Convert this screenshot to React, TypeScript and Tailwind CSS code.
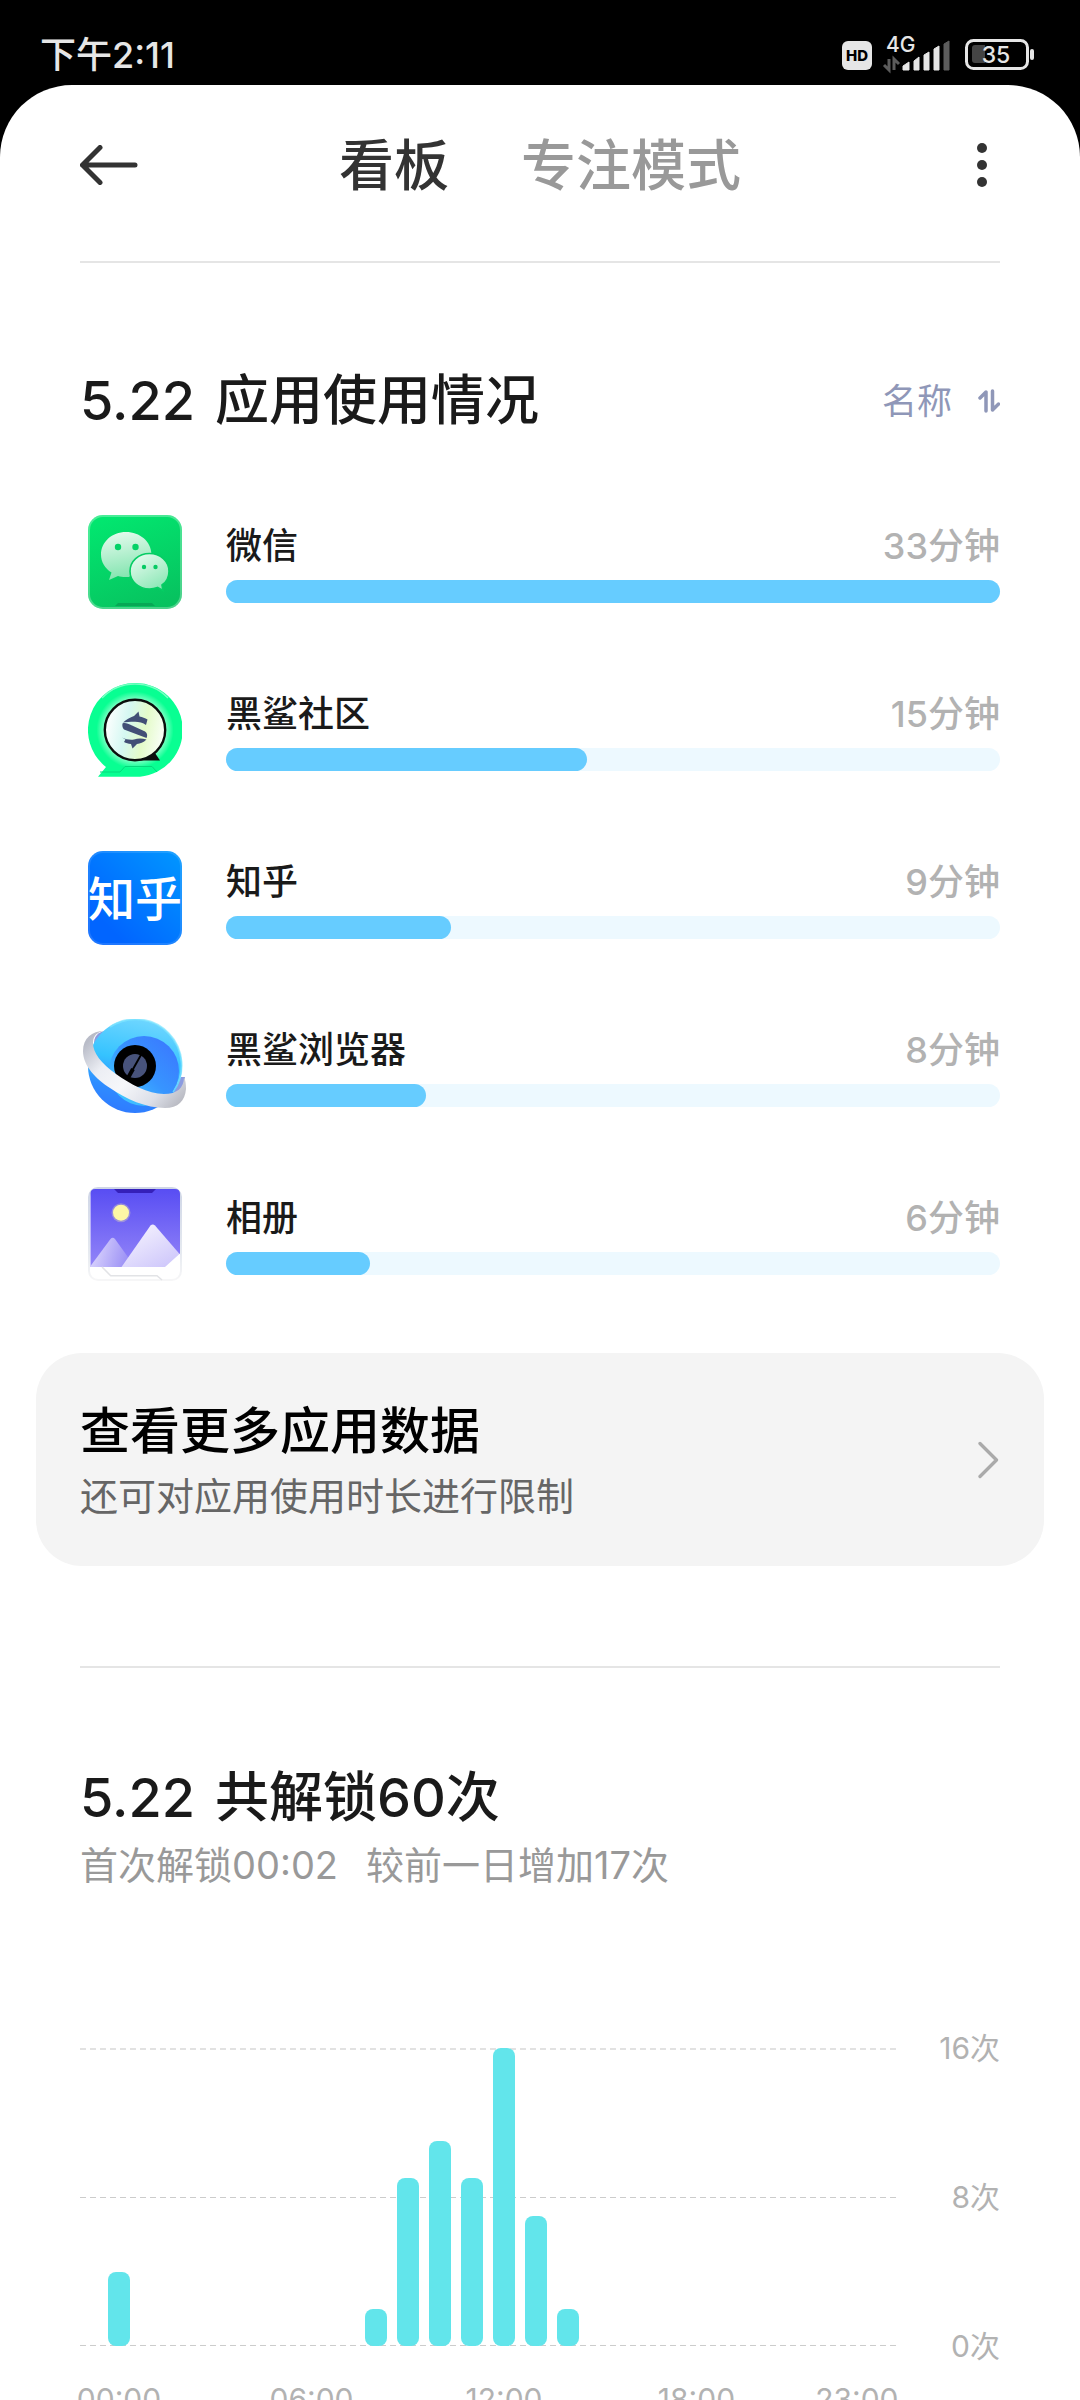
import { ReactNode } from 'react';

type AppUsage = {
  name: string;
  minutes: number;
  percent: number;
  icon: ReactNode;
};

const WeChatIcon = () => (
  <svg width="94" height="94" viewBox="0 0 94 94" aria-hidden="true">
    <defs>
      <linearGradient id="wc-bg" x1="0.3" y1="0" x2="0.7" y2="1">
        <stop offset="0" stopColor="#02e66f" />
        <stop offset="1" stopColor="#07c25f" />
      </linearGradient>
      <linearGradient id="wc-big" x1="0.4" y1="0" x2="0.6" y2="1">
        <stop offset="0" stopColor="#e2faec" />
        <stop offset="1" stopColor="#7ce3ab" />
      </linearGradient>
      <linearGradient id="wc-small" x1="0.2" y1="0" x2="0.8" y2="1">
        <stop offset="0" stopColor="#e6fbef" />
        <stop offset="1" stopColor="#86e6b2" />
      </linearGradient>
    </defs>
    <rect width="94" height="94" rx="15" fill="url(#wc-bg)" />
    <rect x="1" y="1" width="92" height="92" rx="14" fill="none" stroke="#fff" strokeOpacity="0.28" strokeWidth="2" />
    <path d="M27 91 30 88H64L67 91Z" fill="#06a855" />
    <path
      d="M38 17C24 17 13 27 13 39.500C13 47 17 53.500 23.500 57.500L21 65L30 61C33 62 36 62.300 41 62L63.500 39C63 26.500 52 17 38 17Z"
      fill="url(#wc-big)"
    />
    <circle cx="30" cy="32" r="3.200" fill="#04d267" />
    <circle cx="47.500" cy="32" r="3.200" fill="#04d267" />
    <path
      d="M61.500 38.500C50.500 38.500 42 46.500 42 56.200C42 66 50.500 74 61.500 74C64.500 74 67 73.500 69.500 72.500L75 75.500L74 70C78.500 67 81 62 81 56.200C81 46.500 72.500 38.500 61.500 38.500Z"
      fill="url(#wc-small)"
      stroke="#06cd64"
      strokeWidth="1.600"
    />
    <circle cx="56" cy="52" r="2.200" fill="#06ca63" />
    <circle cx="67.500" cy="52" r="2.200" fill="#06ca63" />
  </svg>
);

const CommunityIcon = () => (
  <svg width="94" height="94" viewBox="0 0 94 94" aria-hidden="true">
    <defs>
      <radialGradient id="cm-glow" cx="47" cy="47" r="47" gradientUnits="userSpaceOnUse">
        <stop offset="0.650" stopColor="#7dffc4" />
        <stop offset="0.820" stopColor="#08ff92" />
        <stop offset="1" stopColor="#08ff92" />
      </radialGradient>
      <linearGradient id="cm-disc" x1="0" y1="0.400" x2="1" y2="0.600">
        <stop offset="0" stopColor="#fff" />
        <stop offset="0.350" stopColor="#d5f8f2" />
        <stop offset="0.650" stopColor="#e4fbc9" />
        <stop offset="1" stopColor="#fbfffb" />
      </linearGradient>
    </defs>
    <path d="M47 0A47 47 0 0 1 52 93.800H10L18 84A47 47 0 0 1 47 0Z" fill="url(#cm-glow)" />
    <path d="M14 15A46 46 0 0 1 80 15" fill="none" stroke="#7affc4" strokeWidth="1.500" />
    <path d="M12 89H32L37 83.500H64L69 89" fill="none" stroke="#05d97c" strokeWidth="1" />
    <path d="M67 70L72 77.500H47Z" fill="#0b0f0d" />
    <circle cx="47" cy="47" r="30.200" fill="url(#cm-disc)" stroke="#0b0f0d" strokeWidth="2.400" />
    <path
      d="M35 39.500C38 36.500 42 34.500 46 33L50.500 28.500L51.500 33.500C54.500 34 57 35 59.500 36.500L58 42C55 39.500 50 38.500 46 38.700C42 38.800 38 39 35 39.500Z"
      fill="#424f76"
    />
    <path d="M34.500 40.500C37 39.500 40 40.500 44 42.500L56 48C59 49.500 60 52 58.500 55L36 46.500C34.500 45 34 42.500 34.500 40.500Z" fill="#424f76" />
    <path
      d="M34 54.500C38 56.500 42 57 46 56.500C50 55 54 55 58.500 56.500C55.500 59.500 52 60.500 49 61L44.500 65.500L43 61C40 60.800 38 60 36 59L37.500 56.500Z"
      fill="#424f76"
    />
  </svg>
);

const ZhihuIcon = () => (
  <svg width="94" height="94" viewBox="0 0 94 94" aria-hidden="true">
    <defs>
      <linearGradient id="zh-bg" x1="0.200" y1="0.800" x2="1" y2="0">
        <stop offset="0" stopColor="#0165ff" />
        <stop offset="1" stopColor="#0197ff" />
      </linearGradient>
    </defs>
    <rect width="94" height="94" rx="15" fill="url(#zh-bg)" />
    <rect x="1" y="1" width="92" height="92" rx="14" fill="none" stroke="#fff" strokeOpacity="0.120" strokeWidth="2" />
    <text x="47" y="65" textAnchor="middle" fontSize="47" fontWeight="500" fill="#fff">
      知乎
    </text>
  </svg>
);

const BrowserIcon = () => (
  <svg width="104" height="94" viewBox="1 0 104 94" aria-hidden="true">
    <defs>
      <linearGradient id="br-globe" x1="0.600" y1="0" x2="0.400" y2="1">
        <stop offset="0" stopColor="#6fd6ff" />
        <stop offset="0.450" stopColor="#35c3ff" />
        <stop offset="0.750" stopColor="#2f8dff" />
        <stop offset="1" stopColor="#2f7bff" />
      </linearGradient>
      <linearGradient id="br-core" x1="0.900" y1="0.200" x2="0.200" y2="0.900">
        <stop offset="0" stopColor="#3a7dff" />
        <stop offset="0.500" stopColor="#3795ff" />
        <stop offset="1" stopColor="#3fc4ff" />
      </linearGradient>
      <linearGradient id="br-ring" x1="0" y1="0.200" x2="1" y2="0.900">
        <stop offset="0" stopColor="#b9bcc8" />
        <stop offset="0.250" stopColor="#eceef4" />
        <stop offset="0.500" stopColor="#f6f7fa" />
        <stop offset="0.780" stopColor="#dcdfe8" />
        <stop offset="1" stopColor="#b5b6be" />
      </linearGradient>
    </defs>
    <path d="M22 12C14 14 10 20 13 30L26 20Z" fill="#8b9be0" />
    <path d="M103 58C103 68 98 74 88 75L99 58Z" fill="#8b9be0" />
    <circle cx="53" cy="47" r="47" fill="url(#br-globe)" />
    <path d="M28 8A46 46 0 0 1 91 73" fill="none" stroke="#7fe6ff" strokeOpacity="0.700" strokeWidth="2" />
    <circle cx="62" cy="52" r="35" fill="url(#br-core)" />
    <circle cx="53" cy="47" r="21" fill="#000" />
    <circle cx="53" cy="47" r="12" fill="#48537b" />
    <path d="M59.500 35L46 59" stroke="#000" strokeWidth="2" />
    <path d="M51 50L46 59" stroke="#000" strokeWidth="4" />
    <path
      d="M22 12C10 12 1 19 1 32C1 47 14 60 28 69C44 80 64 89 83 89C96 89 103 82 104 70C104 65 103.500 61 102 58C102 69 95 75 82 75C66 75 48 65 34 55C19 44 11 34 11 24C11 17 15 13 22 12Z"
      fill="url(#br-ring)"
    />
  </svg>
);

const AlbumIcon = () => (
  <svg width="94" height="94" viewBox="0 0 94 94" aria-hidden="true">
    <defs>
      <linearGradient id="al-sky" x1="0" y1="0" x2="0" y2="1">
        <stop offset="0" stopColor="#584df3" />
        <stop offset="1" stopColor="#9385f8" />
      </linearGradient>
      <linearGradient id="al-near" x1="0.300" y1="0.100" x2="0.900" y2="0.900">
        <stop offset="0" stopColor="#f1eefe" />
        <stop offset="1" stopColor="#cfc8fb" />
      </linearGradient>
      <linearGradient id="al-far" x1="0" y1="0.500" x2="1" y2="0.700">
        <stop offset="0" stopColor="#dcd6fd" />
        <stop offset="1" stopColor="#9084f4" />
      </linearGradient>
      <linearGradient id="al-edge" x1="0" y1="0" x2="0" y2="1">
        <stop offset="0" stopColor="#cfd6e6" />
        <stop offset="0.700" stopColor="#e6eaf0" />
        <stop offset="1" stopColor="#f6f6f7" />
      </linearGradient>
    </defs>
    <rect x="1" y="1" width="92" height="92" rx="9" fill="#fff" stroke="url(#al-edge)" strokeWidth="2" />
    <path d="M7 2H87Q92 2 92 7V80H2.500V7Q2.500 2 7 2Z" fill="url(#al-sky)" />
    <path d="M26 2H68L64 6H30Z" fill="#3520b9" />
    <circle cx="33" cy="25.700" r="9.500" fill="#fdf6a5" fillOpacity="0.300" />
    <circle cx="33" cy="25.700" r="8" fill="#fdf7a6" />
    <path d="M2.500 79L22.500 52Q24.700 49.500 27 52L47 80H2.500Z" fill="url(#al-far)" />
    <path d="M33.500 80L62.500 38.500Q64.700 36.500 67 38.500L92 67.500V80Z" fill="url(#al-near)" />
    <path d="M92 66.500V80H77Z" fill="#fff" />
    <path d="M14 80L22.700 88.700H69L74 93" fill="none" stroke="#e2e3e6" strokeWidth="1.500" />
  </svg>
);

const apps: AppUsage[] = [
  { name: '微信', minutes: 33, percent: 100, icon: <WeChatIcon /> },
  { name: '黑鲨社区', minutes: 15, percent: 46.6, icon: <CommunityIcon /> },
  { name: '知乎', minutes: 9, percent: 29.1, icon: <ZhihuIcon /> },
  { name: '黑鲨浏览器', minutes: 8, percent: 25.8, icon: <BrowserIcon /> },
  { name: '相册', minutes: 6, percent: 18.6, icon: <AlbumIcon /> },
];

// unlock count for every hour of the day
const unlocks = [4, 0, 0, 0, 0, 0, 0, 0, 2, 9, 11, 9, 16, 7, 2, 0, 0, 0, 0, 0, 0, 0, 0, 0];
const hourLabels: Record<number, string> = {
  0: '00:00',
  6: '06:00',
  12: '12:00',
  18: '18:00',
  23: '23:00',
};

const StatusBar = () => (
  <div className="flex h-[85px] shrink-0 items-center justify-between pt-6 pr-[46px] pl-10 text-[#e6e6e6]">
    <span className="text-[36px] leading-[48px] font-medium">下午2:11</span>
    <svg width="194" height="40" viewBox="0 0 194 40" className="overflow-visible" role="img" aria-label="HD 4G 35%">
      <rect x="2" y="6" width="30" height="29" rx="6" fill="#e6e6e6" />
      <text x="17" y="26" textAnchor="middle" fontSize="15" fontWeight="800" fill="#000">
        HD
      </text>
      <text x="46" y="17" fontSize="21" fontWeight="500" fill="#e6e6e6">
        4G
      </text>
      <path d="M49 24V35L44 30M54 35V24L59 29" fill="none" stroke="#5c5c5c" strokeWidth="3" />
      <path d="M63 35V31L69 27V35Z" fill="#e6e6e6" stroke="#e6e6e6" strokeLinejoin="round" />
      <path d="M74 35V26L79 22V35Z" fill="#e6e6e6" stroke="#e6e6e6" strokeLinejoin="round" />
      <path d="M84 35V20L89 17V35Z" fill="#e6e6e6" stroke="#e6e6e6" strokeLinejoin="round" />
      <path d="M94 35V14L99 11V35Z" fill="#e6e6e6" stroke="#e6e6e6" strokeLinejoin="round" />
      <path d="M104 35V9L109 6V35Z" fill="#5c5c5c" stroke="#5c5c5c" strokeLinejoin="round" />
      <rect x="126.500" y="5.500" width="61" height="28" rx="7" fill="none" stroke="#e6e6e6" strokeWidth="3" />
      <path d="M135 10H145V28H135Q132 28 132 25V13Q132 10 135 10Z" fill="#444" />
      <rect x="190" y="14" width="4" height="11" rx="2" fill="#e6e6e6" />
      <text x="156" y="28" textAnchor="middle" fontSize="23" fontWeight="500" fill="#e6e6e6">
        35
      </text>
    </svg>
  </div>
);

const Header = () => (
  <header className="flex h-40 items-center justify-between px-20">
    <button type="button" aria-label="返回" className="w-[58px]">
      <svg width="58" height="40" viewBox="0 0 58 40" fill="none" stroke="#333" strokeWidth="5" strokeLinecap="round" strokeLinejoin="round">
        <path d="M20 2.500L2.500 20L20 37.500M2.500 20H55" />
      </svg>
    </button>
    <nav className="flex gap-[72px] text-[55px] leading-[72px] font-medium">
      <button type="button" className="text-[#333]">
        看板
      </button>
      <button type="button" className="text-[#999]">
        专注模式
      </button>
    </nav>
    <button type="button" aria-label="更多" className="flex w-[58px] justify-end pr-3">
      <svg width="12" height="46" viewBox="0 0 12 46" fill="#333">
        <circle cx="6" cy="6" r="5" />
        <circle cx="6" cy="23" r="5" />
        <circle cx="6" cy="40" r="5" />
      </svg>
    </button>
  </header>
);

const SectionTitle = ({ date, children }: { date: string; children: ReactNode }) => (
  <h2 className="flex gap-5 text-[54px] leading-[64px] font-medium text-[#1a1a1a]">
    <span>{date}</span>
    <span>{children}</span>
  </h2>
);

const AppRow = ({ app }: { app: AppUsage }) => (
  <li className="flex items-end gap-9">
    <div className="flex w-[110px] justify-center">{app.icon}</div>
    <div className="flex-1 pb-[6px]">
      <div className="mb-[10px] flex justify-between text-[36px] leading-[48px] font-medium">
        <span className="text-[#1a1a1a]">{app.name}</span>
        <span className="text-[#b2b2b2]">{app.minutes}分钟</span>
      </div>
      <div className="h-[23px] rounded-full bg-[#edf9ff]">
        <div className="h-full rounded-full bg-[#66ccff]" style={{ width: `${app.percent}%` }} />
      </div>
    </div>
  </li>
);

const UnlockChart = () => (
  <div className="mt-[139px] text-[30px] leading-10 text-[#b2b2b2]">
    <div className="flex justify-between">
      <div className="mr-[24px] flex-1 py-5">
        <div className="relative h-[298px]">
          <svg className="absolute inset-0 h-full w-full" aria-hidden="true" strokeDasharray="6 4">
            <line x1="0" y1="1" x2="100%" y2="1" stroke="#e2e2e2" strokeWidth="2" />
            <line x1="0" y1="149.500" x2="100%" y2="149.500" stroke="#ccc" />
            <line x1="0" y1="297.500" x2="100%" y2="297.500" stroke="#ccc" />
          </svg>
          <div className="relative flex h-full items-end px-[23px]">
            {unlocks.map((count, hour) => (
              <div key={hour} className="flex h-full flex-1 items-end justify-center">
                <div className="w-[22px] rounded-lg bg-[#62e5eb]" style={{ height: `${(count / 16) * 100}%` }} />
              </div>
            ))}
          </div>
        </div>
      </div>
      <div className="flex w-20 flex-col items-end justify-between">
        <span>16次</span>
        <span>8次</span>
        <span>0次</span>
      </div>
    </div>
    <div className="mt-[13px] mr-[104px] flex px-[23px]">
      {unlocks.map((_, hour) => (
        <div key={hour} className="flex h-10 w-0 flex-1 justify-center whitespace-nowrap">
          {hourLabels[hour]}
        </div>
      ))}
    </div>
  </div>
);

export default function App() {
  return (
    <div className="flex h-screen flex-col overflow-hidden bg-black font-['Inter','Noto_Sans_CJK_SC',sans-serif]">
      <StatusBar />
      <main className="flex-1 overflow-hidden rounded-t-[72px] bg-white">
        <Header />
        <section className="mx-20 mt-4 border-t-2 border-[#e5e5e5] pt-[106px]">
          <div className="flex items-center justify-between">
            <SectionTitle date="5.22">应用使用情况</SectionTitle>
            <button type="button" className="flex items-center gap-[26px] text-[35px] leading-[48px] text-[#8f97b8]">
              名称
              <svg width="22" height="24" viewBox="0 0 22 24" fill="none" stroke="#8f97b8" strokeWidth="3.500" strokeLinecap="round" strokeLinejoin="round" aria-hidden="true">
                <path d="M2 9L8 3V22M14.500 2V21L20.500 15" />
              </svg>
            </button>
          </div>
          <ul className="mt-[82px] flex flex-col gap-[74px]">
            {apps.map((app) => (
              <AppRow key={app.name} app={app} />
            ))}
          </ul>
        </section>
        <a href="#more" className="mx-9 mt-[72px] flex items-center justify-between rounded-[46px] bg-[#f4f4f4] py-[46px] pr-11 pl-11">
          <div>
            <h3 className="text-[50px] leading-[64px] font-medium text-black">查看更多应用数据</h3>
            <p className="mt-[9px] text-[38px] leading-[48px] text-[#666]">还可对应用使用时长进行限制</p>
          </div>
          <svg width="22" height="38" viewBox="0 0 22 38" fill="none" stroke="#aaa" strokeWidth="3.300" strokeLinecap="round" strokeLinejoin="round" aria-hidden="true">
            <path d="M2 2.500L18.500 19L2 35.500" />
          </svg>
        </a>
        <section className="mx-20 mt-[100px] border-t-2 border-[#e5e5e5] pt-[98px]">
          <SectionTitle date="5.22">共解锁60次</SectionTitle>
          <p className="mt-[11px] flex gap-7 text-[38px] leading-[48px] text-[#999]">
            <span>首次解锁00:02</span>
            <span>较前一日增加17次</span>
          </p>
          <UnlockChart />
        </section>
      </main>
    </div>
  );
}
